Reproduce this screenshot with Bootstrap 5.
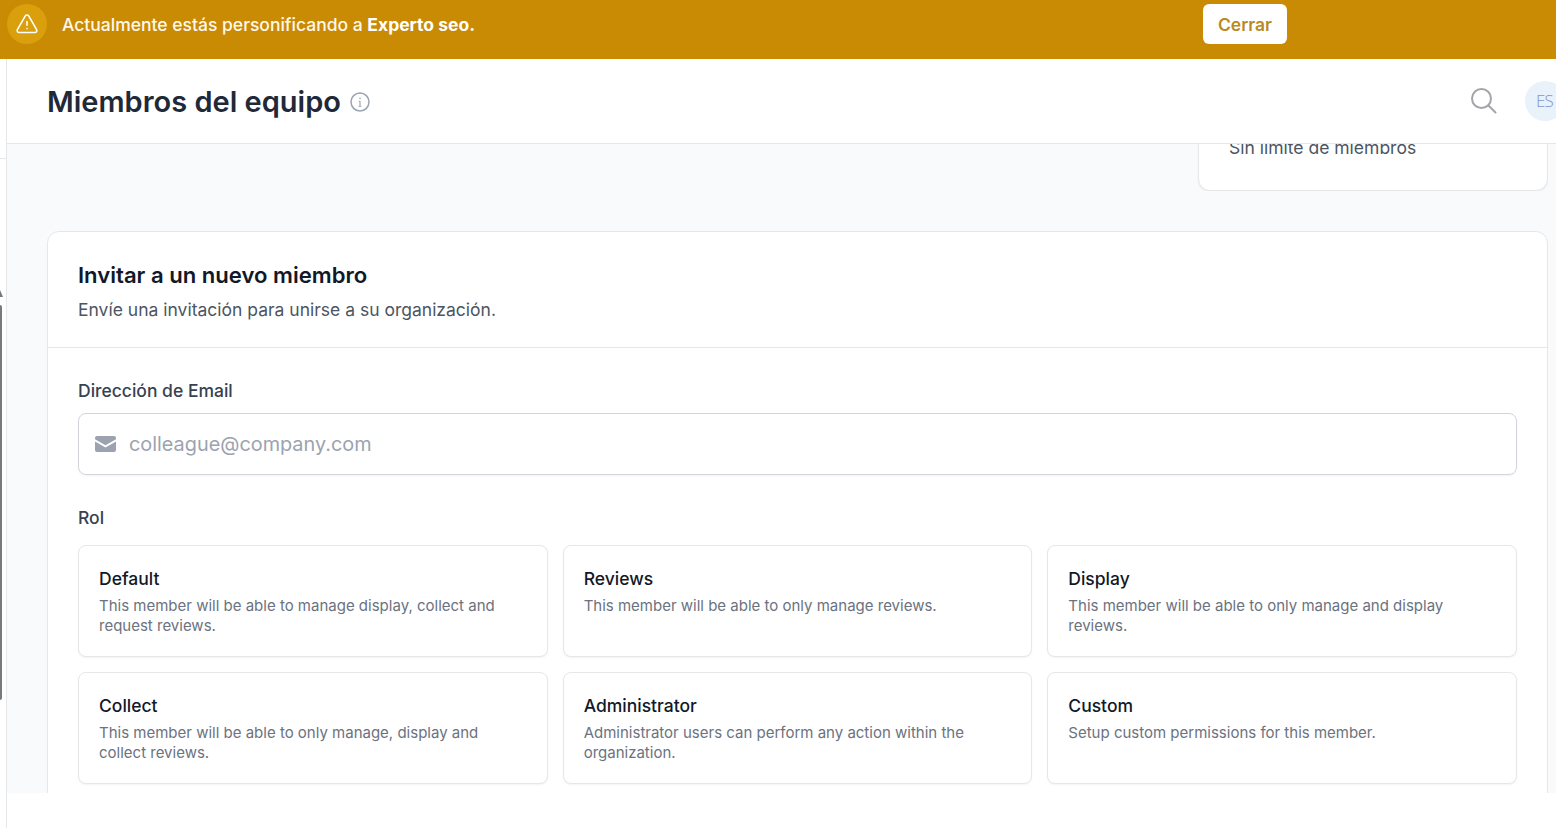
<!DOCTYPE html>
<html lang="es">
<head>
    <meta charset="UTF-8">
    <meta name="viewport" content="width=device-width, initial-scale=1.0">
    <title>Miembros del equipo</title>
    <link href="https://cdn.jsdelivr.net/npm/bootstrap@5.3.0/dist/css/bootstrap.min.css" rel="stylesheet">
    <style>
        html, body { height: 100%; overflow: hidden; }
        body { font-family: Inter, "Liberation Sans", sans-serif; background: #fff; color: #111827; }

        .imp-bar { height: 59px; background: #c98a04; padding: 4px 0 15px 7px; }
        .imp-icon { width: 40px; height: 40px; background: #d99f0c; border-radius: 50%; margin-right: 15px; }
        .imp-text { width: 1141px; font-size: 17.5px; font-weight: 500; color: #fff8ea; padding-top: 2px; }
        .imp-text strong { font-weight: 700; color: #fff; }
        .imp-close { width: 84px; height: 40px; background: #fff; color: #b98a24; font-size: 17.5px; font-weight: 600; border: 0; border-radius: 6px; padding: 2px 0 0; }

        .shell { height: 769px; }
        .side-rail { width: 7px; border-right: 1px solid #e5e7eb; flex-shrink: 0; }
        .side-line { height: 1px; background: #e5e7eb; margin-top: 99px; }
        .side-tip { width: 0; height: 0; border-right: 3px solid transparent; border-bottom: 7px solid #77797d; margin-top: 131px; }
        .side-thumb { width: 2px; height: 395px; background: #77797d; margin-top: 8px; border-radius: 0 2px 2px 0; }

        .main-col { min-width: 0; overflow: hidden; }
        .page-head { height: 85px; border-bottom: 1px solid #e5e7eb; padding-left: 40px; background: #fff; }
        .page-title { font-size: 29px; font-weight: 600; color: #1f2937; margin: 2px 0 0; line-height: 36px; }
        .head-info { margin-left: 9px; margin-top: 2px; }
        .head-search { margin-right: 28px; margin-left: 1px; }
        .lang-pill { width: 40px; height: 40px; border-radius: 50%; background: #e9f1fb; color: #7f97c8; font-family: "Open Sans", sans-serif; font-size: 17px; font-weight: 300; letter-spacing: -1px; margin-right: -9px; flex-shrink: 0; padding: 0 0 0 11px; }

        .scroll-area { height: 649px; overflow: hidden; background: #f9fafb; padding: 0 8px 0 40px; }
        .plan-clip { height: 47px; margin-bottom: 40px; }
        .plan-box { width: 350px; height: 80px; background: #fff; border: 1px solid #e5e7eb; border-radius: 12px; box-shadow: 0 1px 2px rgba(0,0,0,.06); padding: 0 30px; font-size: 17.5px; line-height: 24px; color: #4b5563; }

        .invite-box { background: #fff; border: 1px solid #e5e7eb; border-radius: 12px; }
        .invite-head { padding: 27px 30px 25px; border-bottom: 1px solid #e5e7eb; }
        .invite-title { font-size: 22.1px; font-weight: 600; line-height: 32px; margin: 0 0 7px; color: #111827; }
        .invite-sub { font-size: 17.5px; line-height: 24px; color: #4b5563; margin: 0; }
        .invite-body { padding: 31px 30px 40px; }
        .field-label { font-size: 17.5px; font-weight: 500; line-height: 24px; color: #374151; margin-bottom: 10px; display: block; }
        .role-label { margin-bottom: 15px; }
        .mail-wrap { height: 62px; border: 1px solid #d1d5db; border-radius: 8px; padding-left: 16px; margin-bottom: 31px; box-shadow: 0 1px 2px rgba(0,0,0,.05); }
        .mail-input { border: 0; outline: 0; flex: 1; font-size: 19.85px; color: #111827; margin-left: 13px; padding: 2px 0 0; background: transparent; }
        .mail-input::placeholder { color: #9ca3af; opacity: 1; }

        .role-grid { display: grid; grid-template-columns: repeat(3, 1fr); gap: 15px; }
        .role-item { height: 112px; border: 1px solid #e5e7eb; border-radius: 8px; padding: 20px; background: #fff; box-shadow: 0 1px 2px rgba(0,0,0,.05); }
        .role-name { font-size: 17.5px; font-weight: 500; line-height: 26px; margin-bottom: 4px; color: #111827; }
        .role-desc { font-size: 15px; line-height: 20px; color: #6b7280; }
    </style>
</head>
<body>
    <div class="imp-bar d-flex align-items-center">
        <div class="imp-icon d-flex align-items-center justify-content-center">
            <svg width="24" height="24" viewBox="0 0 24 24" fill="none" stroke="#fff" stroke-width="1.6" stroke-linecap="round" stroke-linejoin="round"><path d="M12 9.5v3.8M12 16.6h.01M10.3 3.9 2.4 17.6c-.7 1.3.2 2.9 1.7 2.9h15.8c1.5 0 2.4-1.6 1.7-2.9L13.7 3.9c-.8-1.3-2.7-1.3-3.4 0z"/></svg>
        </div>
        <div class="imp-text">Actualmente estás personificando a <strong>Experto seo.</strong></div>
        <button type="button" class="imp-close">Cerrar</button>
    </div>

    <div class="shell d-flex">
        <div class="side-rail">
            <div class="side-line"></div>
            <div class="side-tip"></div>
            <div class="side-thumb"></div>
        </div>
        <div class="main-col flex-grow-1">
            <header class="page-head d-flex align-items-center">
                <h1 class="page-title">Miembros del equipo</h1>
                <svg class="head-info" width="20" height="20" viewBox="0 0 20 20" fill="none" stroke="#9ca3af" stroke-width="1.5"><circle cx="10" cy="10" r="9"/><path d="M8.8 9.2H10v5M8.6 14.2h2.8" stroke-width="1.1"/><circle cx="10" cy="6.3" r=".5" fill="#9ca3af" stroke-width=".8"/></svg>
                <div class="ms-auto d-flex align-items-center">
                    <svg class="head-search" width="26" height="26" viewBox="0 0 26 26" fill="none" stroke="#a3a5a8" stroke-width="2" stroke-linecap="round"><circle cx="10.5" cy="10.5" r="9.5"/><path d="m17.5 17.5 7 7"/></svg>
                    <div class="lang-pill d-flex align-items-center">ES</div>
                </div>
            </header>

            <div class="scroll-area">
                <div class="plan-clip d-flex justify-content-end align-items-end overflow-hidden">
                    <div class="plan-box flex-shrink-0">
                        <div class="plan-gap">&nbsp;</div>
                        <div>Sin límite de miembros</div>
                    </div>
                </div>

                <section class="invite-box">
                    <div class="invite-head">
                        <h2 class="invite-title">Invitar a un nuevo miembro</h2>
                        <p class="invite-sub">Envíe una invitación para unirse a su organización.</p>
                    </div>
                    <div class="invite-body">
                        <label class="field-label" for="mail">Dirección de Email</label>
                        <div class="mail-wrap d-flex align-items-center">
                            <svg width="21" height="16" viewBox="0 0 21 16" fill="#9ca3af"><path d="M0 3.2V2a2 2 0 0 1 2-2h17a2 2 0 0 1 2 2v1.2l-10.5 6z"/><path d="M0 5.4V14a2 2 0 0 0 2 2h17a2 2 0 0 0 2-2V5.4l-10.5 6z"/></svg>
                            <input id="mail" class="mail-input" type="email" placeholder="colleague@company.com">
                        </div>
                        <label class="field-label role-label">Rol</label>
                        <div class="role-grid" id="roles"></div>
                    </div>
                </section>
            </div>
        </div>
    </div>

    <script>
        const roles = [
            ['Default', 'This member will be able to manage display, collect and request reviews.'],
            ['Reviews', 'This member will be able to only manage reviews.'],
            ['Display', 'This member will be able to only manage and display reviews.'],
            ['Collect', 'This member will be able to only manage, display and collect reviews.'],
            ['Administrator', 'Administrator users can perform any action within the organization.'],
            ['Custom', 'Setup custom permissions for this member.']
        ];
        document.getElementById('roles').innerHTML = roles.map(r =>
            `<div class="role-item"><div class="role-name">${r[0]}</div><div class="role-desc">${r[1]}</div></div>`
        ).join('');
    </script>
    <script src="https://cdn.jsdelivr.net/npm/bootstrap@5.3.0/dist/js/bootstrap.bundle.min.js"></script>
</body>
</html>
